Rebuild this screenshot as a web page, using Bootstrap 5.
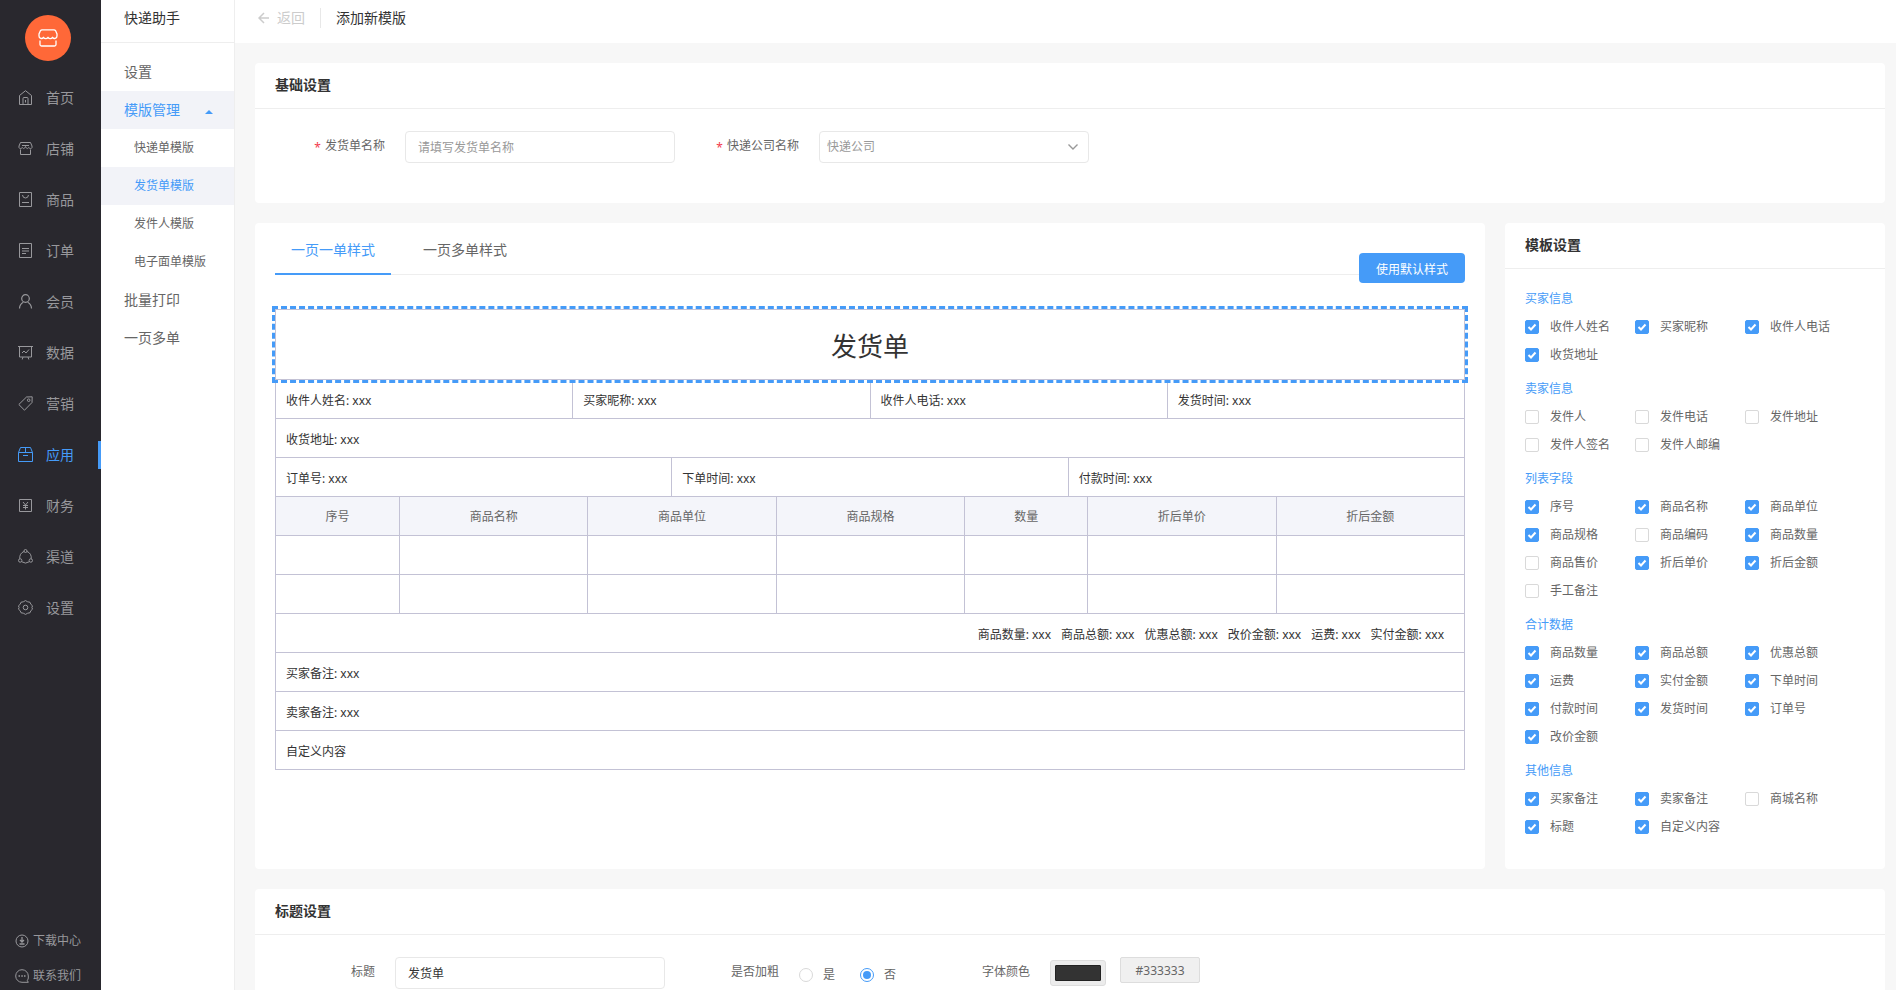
<!DOCTYPE html>
<html lang="zh-CN">
<head>
<meta charset="utf-8">
<meta name="viewport" content="width=device-width, initial-scale=1">
<title>添加新模版</title>
<link href="https://cdn.jsdelivr.net/npm/bootstrap@5.3.0/dist/css/bootstrap.min.css" rel="stylesheet">
<style>
:root { --brand: #459bf8; --ink: #333; --muted: #666; --line: #eee; --sheet-line: #c3c2d5; }
body { font: 12px/20px "Noto Sans", "Noto Sans CJK SC", sans-serif; color: var(--muted); background: #f7f7f7; }
a { color: inherit; text-decoration: none; }
.fs-14 { font-size: 14px; }
.scroller { overflow-y: auto; scrollbar-width: none; }
.scroller::-webkit-scrollbar { display: none; }

/* main navigation */
.side { width: 101px; background: #29282e; color: #98989c; }
.logo { width: 46px; height: 46px; background: #ff6838; margin: 15px 0 11px 25px; }
.side-link { height: 51px; padding-left: 18px; gap: 13px; font-size: 14px; position: relative; }
.side-link svg { width: 15px; height: 15px; }
.side-link.active { color: var(--brand); }
.side-link.active::after { content: ""; position: absolute; right: 0; width: 3px; height: 28px; background: var(--brand); }
.side-feet { gap: 7px; }
.side-foot { height: 28px; padding-left: 15px; gap: 4px; }
.side svg, .ico { fill: none; stroke: currentColor; flex: none; }

/* section navigation */
.subnav { width: 134px; background: #fff; border-right: 1px solid var(--line); }
.subnav-title { height: 43px; padding: 0 23px 6px; border-bottom: 1px solid var(--line); margin-bottom: 10px; color: var(--ink); }
.subnav-link { height: 38px; padding: 0 21px 0 23px; font-size: 14px; }
.subnav-link.deep { padding: 0 0 0 33px; font-size: 12px; }
.subnav-link.on { background: #f2f3f8; color: var(--brand); }
.caret { border: 4px solid transparent; border-top: 0; border-bottom-color: currentColor; margin-top: 4px; }

/* page header */
.topbar { height: 43px; background: #fff; padding: 0 23px 8px; color: var(--ink); gap: 15px; }
.back { color: #ccc; gap: 8px; padding-right: 15px; border-right: 1px solid #e8e8e8; }

/* panels */
.panel { background: #fff; border-radius: 4px; }
.panel-title { height: 46px; padding: 0 20px; margin: 0; border-bottom: 1px solid var(--line); font-size: 14px; line-height: 44px; font-weight: 700; color: var(--ink); }
.work, .gap-20 { gap: 20px; }
.work { padding: 20px 11px 20px 20px; }
.field { width: 270px; height: 32px; border: 1px solid #e8e8e8; border-radius: 4px; font-size: 12px; padding: 0 12px; color: var(--ink); }
.field::placeholder { color: #999; }
select.field { color: #999; padding: 0 7px; background-size: 12px; background-position: right 9px center;
  background-image: url("data:image/svg+xml,%3Csvg xmlns='http://www.w3.org/2000/svg' viewBox='0 0 12 12' fill='none' stroke='%23999' stroke-width='1.4'%3E%3Cpath d='M1.5 3.5 6 8l4.5-4.5'/%3E%3C/svg%3E"); }
.form-line { padding-top: 22px; }
.form-label-cell { line-height: 30px; text-align: right; margin-right: 20px; }
.star { color: #f23c4c; margin-right: 4px; vertical-align: -2px; }
.basic { min-height: 140px; }
.w-130 { width: 130px; }
.w-120 { width: 120px; }
.w-124 { width: 124px; }
.w-114 { width: 114px; }
.w-134 { width: 134px; }

/* style tabs */
.sample { padding: 0 20px; }
.style-tabs { height: 52px; border-bottom: 1px solid var(--line); gap: 16px; position: relative; margin-bottom: 34px; }
.style-tab { height: 52px; padding: 0 16px; font-size: 14px; line-height: 54px; border: 0; background: none; color: var(--muted); }
.style-tab.active { color: var(--brand); border-bottom: 2px solid var(--brand); }
.btn-brand { position: absolute; right: 0; bottom: -9px; height: 30px; padding: 0 17px; font-size: 12px; line-height: 33px; color: #fff; background: var(--brand); border: 0; border-radius: 4px; }
.btn-brand:hover { color: #fff; background: #3488e6; }

/* printed sheet */
.sheet { color: var(--ink); border: 1px solid var(--sheet-line); border-top: 0; border-bottom: 0; }
.sheet-title { height: 71px; margin: 0 -1px; border: 1px solid var(--sheet-line); font-size: 26px; line-height: 73px; text-align: center; font-weight: 400; position: relative; }
.sheet-title::before { content: ""; position: absolute; inset: -4px; border: 3px dashed var(--brand); }
.sheet-row > div { flex: 1 1 0; height: 39px; line-height: 41px; padding: 0 10px; border-bottom: 1px solid var(--sheet-line); }
.sheet-row > div + div { border-left: 1px solid var(--sheet-line); }
.sheet-row .sums { gap: 10px; padding-right: 20px; }
.goods { width: 100%; table-layout: fixed; border-collapse: separate; border-spacing: 0; }
.goods th, .goods td { height: 39px; padding: 2px 0 0; text-align: center; font-weight: 400; border-bottom: 1px solid var(--sheet-line); }
.goods th { background: #f4f5fa; color: var(--muted); }
.goods th + th, .goods td + td { border-left: 1px solid var(--sheet-line); }
.goods .narrow { width: 10.35%; }

/* field picker */
.picker { width: 380px; }
.picks { padding: 14px 20px 24px; }
.picks fieldset { display: grid; grid-template-columns: repeat(3, 110px); margin-bottom: 4px; }
.picks legend { grid-column: 1 / -1; font-size: 12px; line-height: 28px; padding-top: 2px; color: var(--brand); margin: 0; float: none; width: auto; }
.picks label { height: 28px; gap: 11px; }
.tick { width: 14px; height: 14px; margin: 0; border: 1px solid #d9d9d9; box-shadow: none; flex: none; }
.tick[type=checkbox] { border-radius: 2px; }
.tick:checked { background-color: var(--brand); border-color: var(--brand); }
.tick[type=checkbox]:checked { background-image: url("data:image/svg+xml,%3Csvg xmlns='http://www.w3.org/2000/svg' viewBox='0 0 12 12' fill='none' stroke='%23fff' stroke-width='2'%3E%3Cpath d='m2.5 6 2.500 2.500 4.500-5'/%3E%3C/svg%3E"); }
.tick[type=radio]:checked { background: var(--brand) content-box; padding: 2px; }
.choice { gap: 10px; height: 36px; }
.choice + .choice { margin-left: 25px; }
.swatch { width: 56px; height: 26px; margin-top: 3px; padding: 4px; background: #ececec; border: 1px solid #ddd; border-radius: 3px; }
.swatch::-webkit-color-swatch-wrapper { padding: 0; }
.swatch::-webkit-color-swatch { border: 1px solid #222; border-radius: 1px; }
.hex { height: 26px; width: 80px; margin-left: 14px; padding: 0; background: #f0f0f0; border: 1px solid #ddd; border-radius: 2px; color: var(--muted); text-align: center; }
</style>
</head>
<body>
<div class="d-flex vh-100 overflow-hidden">
  <nav class="side d-flex flex-column flex-shrink-0 scroller" aria-label="主菜单">
    <a href="#" class="logo rounded-circle d-flex align-items-center justify-content-center text-white flex-shrink-0" aria-label="店铺首页">
      <svg width="20" height="18" viewBox="0 0 20 18" stroke-width="1.300"><path d="M4 .8h12q1 0 1.500.8L19 5v2a2.500 2.500 0 0 1-4.500 1.500 2.800 2.800 0 0 1-4.500 0 2.800 2.800 0 0 1-4.500 0A2.500 2.500 0 0 1 1 7V5l1.500-3.400Q3 .8 4 .8zM2 11.500v4q0 1.500 1.500 1.500h13q1.500 0 1.500-1.500v-4"/></svg>
    </a>
    <a href="#" class="side-link d-flex align-items-center"><svg viewBox="0 0 15 15"><path d="M1.500 5.500 7.500.7l6 4.800v9h-12zM5 14.500V8.500q0-1 1-1h3q1 0 1 1v6M7.500 10v2.500"/></svg>首页</a>
    <a href="#" class="side-link d-flex align-items-center"><svg viewBox="0 0 15 15"><path d="M2.500 1.500h10L14 5v1.500c-.5 1.500-2.500 1.500-3.200 0-1 1.500-2.300 1.500-3.300-1-1 2.500-2.300 2.500-3.300 1-.7 1.500-2.700 1.500-3.200 0V5zM2.500 8.500v5h10v-5M4 4.500h7"/></svg>店铺</a>
    <a href="#" class="side-link d-flex align-items-center"><svg viewBox="0 0 15 15"><path d="M1.500.5h12v14h-12zM4.500 3q.3 3 3 3t3-3M4 10.500h7"/></svg>商品</a>
    <a href="#" class="side-link d-flex align-items-center"><svg viewBox="0 0 15 15"><path d="M1.500.5h12v14h-12zM4 5.500h7M4 8h7M4 10.500h4"/></svg>订单</a>
    <a href="#" class="side-link d-flex align-items-center"><svg viewBox="0 0 15 15" stroke-width="1.200"><circle cx="7.500" cy="4.500" r="3.800"/><path d="M1.500 14.500c.2-4 1.800-5.300 3.800-6.300M13.500 14.500c-.2-4-1.800-5.300-3.800-6.300"/></svg>会员</a>
    <a href="#" class="side-link d-flex align-items-center"><svg viewBox="0 0 15 15"><path d="M0 1.500h15M1.500 1.500v10.500h12V1.500M4 8l2-2 2 2 3-3.500M5 12l-.8 2.500M10 12l.8 2.500"/></svg>数据</a>
    <a href="#" class="side-link d-flex align-items-center"><svg viewBox="0 0 15 15"><path d="M.8 8.500 8.500 1l5.700-.2-.2 5.700-7.500 7.700z"/><circle cx="10.700" cy="4.200" r="1.300"/></svg>营销</a>
    <a href="#" class="side-link d-flex align-items-center active" aria-current="page"><svg viewBox="0 0 15 15"><path d="M.5 5.500h14v9H.5zM.5 5.500l2-5h10l2 5M7.500.5v5M5 8.500h5"/></svg>应用</a>
    <a href="#" class="side-link d-flex align-items-center"><svg viewBox="0 0 15 15"><path d="M1.500 1.500h12v12h-12zM5 4l2.500 3L10 4M7.500 7v4.500M5 7.500h5M5 9.500h5"/></svg>财务</a>
    <a href="#" class="side-link d-flex align-items-center"><svg viewBox="0 0 15 15"><circle cx="7.500" cy="2" r="1.500"/><circle cx="2.200" cy="11.500" r="1.700"/><circle cx="12.800" cy="11.500" r="1.700"/><path d="M6 2.500C3 3.500 1.300 6.500 1.800 9.800M9 2.500c3 1 4.700 4 4.200 7.300M3.600 12.700q3.900 2.800 7.800 0"/></svg>渠道</a>
    <a href="#" class="side-link d-flex align-items-center"><svg viewBox="0 0 15 15"><path d="M5.300 1.800Q7.500-.6 9.700 1.800q3-.4 3.200 2.600 2.800 1.300 1 3.100 1.800 1.800-1 3.100-.2 3-3.200 2.600-2.200 2.400-4.400 0-3 .4-3.200-2.600-2.800-1.300-1-3.100-1.800-1.800 1-3.100.2-3 3.200-2.600z"/><circle cx="7.500" cy="7.500" r="2.300"/></svg>设置</a>
    <div class="side-feet d-flex flex-column mt-auto flex-shrink-0">
      <a href="#" class="side-foot d-flex align-items-center"><svg width="14" height="14" viewBox="0 0 14 14"><circle cx="7" cy="7" r="6"/><path d="M7 3v4.500M5 6l2 2 2-2M4.500 10h5" stroke-width="1.300"/></svg>下载中心</a>
      <a href="#" class="side-foot d-flex align-items-center"><svg width="14" height="14" viewBox="0 0 14 14"><path d="M13.300 13.300H7A6.300 6.300 0 1 1 13.300 7v2q0 1-1 2.500z"/><path d="M3.500 7H5M6.300 7h1.500M9 7h1.500" stroke-width="1.500"/></svg>联系我们</a>
    </div>
  </nav>

  <nav class="subnav flex-shrink-0 scroller" aria-label="快递助手">
    <div class="subnav-title d-flex align-items-center fs-14">快递助手</div>
    <a href="#" class="subnav-link d-flex align-items-center">设置</a>
    <a href="#" class="subnav-link d-flex align-items-center justify-content-between on">模版管理<span class="caret"></span></a>
    <a href="#" class="subnav-link deep d-flex align-items-center">快递单模版</a>
    <a href="#" class="subnav-link deep d-flex align-items-center on" aria-current="page">发货单模版</a>
    <a href="#" class="subnav-link deep d-flex align-items-center">发件人模版</a>
    <a href="#" class="subnav-link deep d-flex align-items-center">电子面单模版</a>
    <a href="#" class="subnav-link d-flex align-items-center">批量打印</a>
    <a href="#" class="subnav-link d-flex align-items-center">一页多单</a>
  </nav>

  <main class="flex-grow-1 scroller">
    <header class="topbar d-flex align-items-center fs-14">
      <a href="#" class="back d-flex align-items-center"><svg class="ico" width="11" height="12" viewBox="0 0 11 12" stroke-width="1.500"><path d="M11 6H1M6 1 1 6l5 5"/></svg>返回</a>
      <span>添加新模版</span>
    </header>

    <div class="work d-flex flex-column">
      <section class="panel basic">
        <h2 class="panel-title">基础设置</h2>
        <div class="form-line d-flex">
          <label class="form-label-cell w-130" for="sheetName"><span class="star">*</span>发货单名称</label>
          <input id="sheetName" class="form-control field" type="text" placeholder="请填写发货单名称">
          <label class="form-label-cell w-124" for="company"><span class="star">*</span>快递公司名称</label>
          <select id="company" class="form-select field"><option>快递公司</option></select>
        </div>
      </section>

      <div class="d-flex gap-20">
        <section class="panel sample flex-grow-1">
          <div class="style-tabs d-flex" role="tablist">
            <button class="style-tab active" role="tab" aria-selected="true" type="button">一页一单样式</button>
            <button class="style-tab" role="tab" aria-selected="false" type="button">一页多单样式</button>
            <button class="btn btn-brand" type="button">使用默认样式</button>
          </div>
          <div class="sheet">
            <h1 class="sheet-title">发货单</h1>
            <div class="sheet-row d-flex"><div>收件人姓名: xxx</div><div>买家昵称: xxx</div><div>收件人电话: xxx</div><div>发货时间: xxx</div></div>
            <div class="sheet-row d-flex"><div>收货地址: xxx</div></div>
            <div class="sheet-row d-flex"><div>订单号: xxx</div><div>下单时间: xxx</div><div>付款时间: xxx</div></div>
            <table class="goods">
              <thead><tr><th class="narrow">序号</th><th>商品名称</th><th>商品单位</th><th>商品规格</th><th class="narrow">数量</th><th>折后单价</th><th>折后金额</th></tr></thead>
              <tbody>
                <tr><td></td><td></td><td></td><td></td><td></td><td></td><td></td></tr>
                <tr><td></td><td></td><td></td><td></td><td></td><td></td><td></td></tr>
              </tbody>
            </table>
            <div class="sheet-row d-flex"><div class="sums d-flex justify-content-end"><span>商品数量: xxx</span><span>商品总额: xxx</span><span>优惠总额: xxx</span><span>改价金额: xxx</span><span>运费: xxx</span><span>实付金额: xxx</span></div></div>
            <div class="sheet-row d-flex"><div>买家备注: xxx</div></div>
            <div class="sheet-row d-flex"><div>卖家备注: xxx</div></div>
            <div class="sheet-row d-flex"><div>自定义内容</div></div>
          </div>
        </section>

        <section class="panel picker flex-shrink-0">
          <h2 class="panel-title">模板设置</h2>
          <form class="picks">
            <fieldset>
              <legend>买家信息</legend>
              <label class="d-flex align-items-center"><input class="form-check-input tick" type="checkbox" checked>收件人姓名</label>
              <label class="d-flex align-items-center"><input class="form-check-input tick" type="checkbox" checked>买家昵称</label>
              <label class="d-flex align-items-center"><input class="form-check-input tick" type="checkbox" checked>收件人电话</label>
              <label class="d-flex align-items-center"><input class="form-check-input tick" type="checkbox" checked>收货地址</label>
            </fieldset>
            <fieldset>
              <legend>卖家信息</legend>
              <label class="d-flex align-items-center"><input class="form-check-input tick" type="checkbox">发件人</label>
              <label class="d-flex align-items-center"><input class="form-check-input tick" type="checkbox">发件电话</label>
              <label class="d-flex align-items-center"><input class="form-check-input tick" type="checkbox">发件地址</label>
              <label class="d-flex align-items-center"><input class="form-check-input tick" type="checkbox">发件人签名</label>
              <label class="d-flex align-items-center"><input class="form-check-input tick" type="checkbox">发件人邮编</label>
            </fieldset>
            <fieldset>
              <legend>列表字段</legend>
              <label class="d-flex align-items-center"><input class="form-check-input tick" type="checkbox" checked>序号</label>
              <label class="d-flex align-items-center"><input class="form-check-input tick" type="checkbox" checked>商品名称</label>
              <label class="d-flex align-items-center"><input class="form-check-input tick" type="checkbox" checked>商品单位</label>
              <label class="d-flex align-items-center"><input class="form-check-input tick" type="checkbox" checked>商品规格</label>
              <label class="d-flex align-items-center"><input class="form-check-input tick" type="checkbox">商品编码</label>
              <label class="d-flex align-items-center"><input class="form-check-input tick" type="checkbox" checked>商品数量</label>
              <label class="d-flex align-items-center"><input class="form-check-input tick" type="checkbox">商品售价</label>
              <label class="d-flex align-items-center"><input class="form-check-input tick" type="checkbox" checked>折后单价</label>
              <label class="d-flex align-items-center"><input class="form-check-input tick" type="checkbox" checked>折后金额</label>
              <label class="d-flex align-items-center"><input class="form-check-input tick" type="checkbox">手工备注</label>
            </fieldset>
            <fieldset>
              <legend>合计数据</legend>
              <label class="d-flex align-items-center"><input class="form-check-input tick" type="checkbox" checked>商品数量</label>
              <label class="d-flex align-items-center"><input class="form-check-input tick" type="checkbox" checked>商品总额</label>
              <label class="d-flex align-items-center"><input class="form-check-input tick" type="checkbox" checked>优惠总额</label>
              <label class="d-flex align-items-center"><input class="form-check-input tick" type="checkbox" checked>运费</label>
              <label class="d-flex align-items-center"><input class="form-check-input tick" type="checkbox" checked>实付金额</label>
              <label class="d-flex align-items-center"><input class="form-check-input tick" type="checkbox" checked>下单时间</label>
              <label class="d-flex align-items-center"><input class="form-check-input tick" type="checkbox" checked>付款时间</label>
              <label class="d-flex align-items-center"><input class="form-check-input tick" type="checkbox" checked>发货时间</label>
              <label class="d-flex align-items-center"><input class="form-check-input tick" type="checkbox" checked>订单号</label>
              <label class="d-flex align-items-center"><input class="form-check-input tick" type="checkbox" checked>改价金额</label>
            </fieldset>
            <fieldset>
              <legend>其他信息</legend>
              <label class="d-flex align-items-center"><input class="form-check-input tick" type="checkbox" checked>买家备注</label>
              <label class="d-flex align-items-center"><input class="form-check-input tick" type="checkbox" checked>卖家备注</label>
              <label class="d-flex align-items-center"><input class="form-check-input tick" type="checkbox">商城名称</label>
              <label class="d-flex align-items-center"><input class="form-check-input tick" type="checkbox" checked>标题</label>
              <label class="d-flex align-items-center"><input class="form-check-input tick" type="checkbox" checked>自定义内容</label>
            </fieldset>
          </form>
        </section>
      </div>

      <section class="panel pb-4">
        <h2 class="panel-title">标题设置</h2>
        <div class="form-line d-flex">
          <label class="form-label-cell w-120" for="heading">标题</label>
          <input id="heading" class="form-control field" type="text" value="发货单">
          <span class="form-label-cell w-114">是否加粗</span>
          <label class="choice d-flex align-items-center"><input class="form-check-input tick" type="radio" name="bold">是</label>
          <label class="choice d-flex align-items-center"><input class="form-check-input tick" type="radio" name="bold" checked>否</label>
          <label class="form-label-cell w-134" for="colour">字体颜色</label>
          <input id="colour" class="swatch" type="color" value="#333333">
          <input class="hex" type="text" value="#333333" aria-label="颜色值">
        </div>
      </section>
    </div>
  </main>
</div>
<script src="https://cdn.jsdelivr.net/npm/bootstrap@5.3.0/dist/js/bootstrap.bundle.min.js"></script>
</body>
</html>
